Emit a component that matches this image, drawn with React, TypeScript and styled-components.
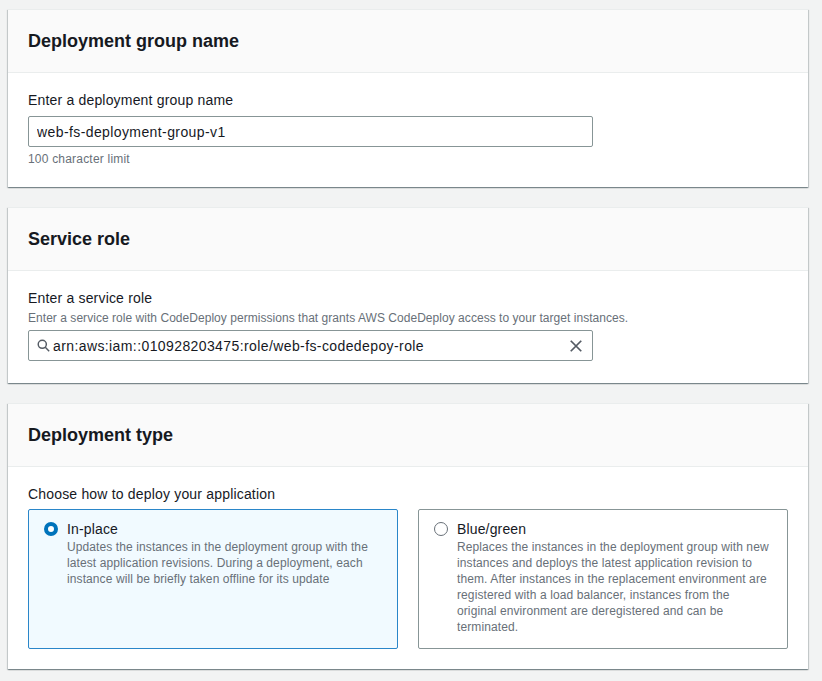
import React, { useState } from 'react';
import styled, { createGlobalStyle } from 'styled-components';

const GlobalStyle = createGlobalStyle`
    html, body {
        margin: 0;
        padding: 0;
        background-color: #f2f3f3;
        font-family: "Liberation Sans", Arial, sans-serif;
        color: #16191f;
    }
`

const Page = styled.div`
    display: flex;
    flex-direction: column;
    gap: 20px;
    padding: 9px 14px 12px 8px;
`

const Card = styled.section`
    background-color: #ffffff;
    border-top: 1px solid #eaeded;
    box-shadow: 0 1px 1px 0 rgba(0, 28, 36, 0.3), 1px 1px 1px 0 rgba(0, 28, 36, 0.15), -1px 1px 1px 0 rgba(0, 28, 36, 0.15);
`

const CardHeader = styled.header`
    background-color: #fafafa;
    border-bottom: 1px solid #eaeded;
    padding: 20px 20px;
    h2 {
        margin: 0;
        font-size: 18px;
        line-height: 22px;
        font-weight: 700;
        color: #16191f;
    }
`

const CardBody = styled.div<{ $bottom?: number }>`
    padding: 16px 20px ${p => p.$bottom ?? 20}px;
`

const Label = styled.label`
    display: block;
    font-size: 14px;
    line-height: 22px;
    letter-spacing: 0.18px;
    color: #16191f;
`

const Description = styled.div`
    font-size: 12px;
    line-height: 18px;
    letter-spacing: 0.04px;
    color: #687078;
`

const Hint = styled.div`
    margin-top: 5px;
    font-size: 12px;
    line-height: 15px;
    letter-spacing: 0.2px;
    color: #687078;
`

const InputBox = styled.div<{ $top: number }>`
    display: flex;
    align-items: center;
    gap: 3px;
    width: 565px;
    height: 31px;
    box-sizing: border-box;
    margin-top: ${p => p.$top}px;
    padding: 0 9px 0 8px;
    border: 1px solid #879596;
    border-radius: 2px;
    background: #fff;
    input {
        flex: 1;
        min-width: 0;
        border: none;
        outline: none;
        padding: 0;
        background: transparent;
        font-family: inherit;
        font-size: 14px;
        letter-spacing: 0.4px;
        color: #16191f;
    }
`

const ClearButton = styled.button`
    border: none;
    background: none;
    padding: 0;
    display: flex;
    cursor: pointer;
`

const Tiles = styled.div`
    display: grid;
    grid-template-columns: 1fr 1fr;
    gap: 20px;
    margin-top: 4px;
`

const Tile = styled.label<{ $selected: boolean }>`
    display: flex;
    gap: 9px;
    align-items: flex-start;
    min-height: 140px;
    box-sizing: border-box;
    padding: 9px 15px 13px;
    border: 1px solid ${p => (p.$selected ? '#2a86c9' : '#879596')};
    border-radius: 2px;
    background-color: ${p => (p.$selected ? '#f1faff' : '#ffffff')};
    cursor: pointer;
`

const Radio = styled.span<{ $checked: boolean }>`
    flex: none;
    width: 14px;
    height: 14px;
    box-sizing: border-box;
    margin-top: 3px;
    border-radius: 50%;
    border: ${p => (p.$checked ? '4px solid #0073bb' : '1px solid #687078')};
    background: #fff;
`

const TileText = styled.div`
    display: flex;
    flex-direction: column;
`

const TileTitle = styled.span`
    font-size: 14px;
    line-height: 20px;
    letter-spacing: 0.15px;
    color: #16191f;
`

const TileDesc = styled.span`
    font-size: 12px;
    line-height: 16px;
    letter-spacing: 0.1px;
    color: #687078;
`

const SearchIcon = () => (
    <svg width="13" height="13" viewBox="0 0 16 16" fill="none" stroke="#545b64" strokeWidth="1.8">
        <circle cx="6.5" cy="6.5" r="5" />
        <path d="M10.2 10.2 L15 15" />
    </svg>
)

const CloseIcon = () => (
    <svg width="14" height="14" viewBox="0 0 16 16" fill="none" stroke="#545b64" strokeWidth="2">
        <path d="M2 2 L14 14 M14 2 L2 14" />
    </svg>
)

const types = [
    {
        id: 'inplace',
        title: 'In-place',
        text: 'Updates the instances in the deployment group with the latest application revisions. During a deployment, each instance will be briefly taken offline for its update',
    },
    {
        id: 'bluegreen',
        title: 'Blue/green',
        text: 'Replaces the instances in the deployment group with new instances and deploys the latest application revision to them. After instances in the replacement environment are registered with a load balancer, instances from the original environment are deregistered and can be terminated.',
    },
]

export default function App() {
    const [groupName, setGroupName] = useState('web-fs-deployment-group-v1')
    const [role, setRole] = useState('arn:aws:iam::010928203475:role/web-fs-codedepoy-role')
    const [type, setType] = useState('inplace')

    return (
        <Page>
            <GlobalStyle />
            <Card>
                <CardHeader><h2>Deployment group name</h2></CardHeader>
                <CardBody>
                    <Label>Enter a deployment group name</Label>
                    <InputBox $top={5}>
                        <input value={groupName} onChange={e => setGroupName(e.currentTarget.value)} />
                    </InputBox>
                    <Hint>100 character limit</Hint>
                </CardBody>
            </Card>

            <Card>
                <CardHeader><h2>Service role</h2></CardHeader>
                <CardBody $bottom={22}>
                    <Label>Enter a service role</Label>
                    <Description>Enter a service role with CodeDeploy permissions that grants AWS CodeDeploy access to your target instances.</Description>
                    <InputBox $top={3}>
                        <SearchIcon />
                        <input value={role} onChange={e => setRole(e.currentTarget.value)} />
                        <ClearButton onClick={() => setRole('')}><CloseIcon /></ClearButton>
                    </InputBox>
                </CardBody>
            </Card>

            <Card>
                <CardHeader><h2>Deployment type</h2></CardHeader>
                <CardBody>
                    <Label>Choose how to deploy your application</Label>
                    <Tiles>
                        {types.map(t => (
                            <Tile key={t.id} $selected={type === t.id} onClick={() => setType(t.id)}>
                                <Radio $checked={type === t.id} />
                                <TileText>
                                    <TileTitle>{t.title}</TileTitle>
                                    <TileDesc>{t.text}</TileDesc>
                                </TileText>
                            </Tile>
                        ))}
                    </Tiles>
                </CardBody>
            </Card>
        </Page>
    )
}
